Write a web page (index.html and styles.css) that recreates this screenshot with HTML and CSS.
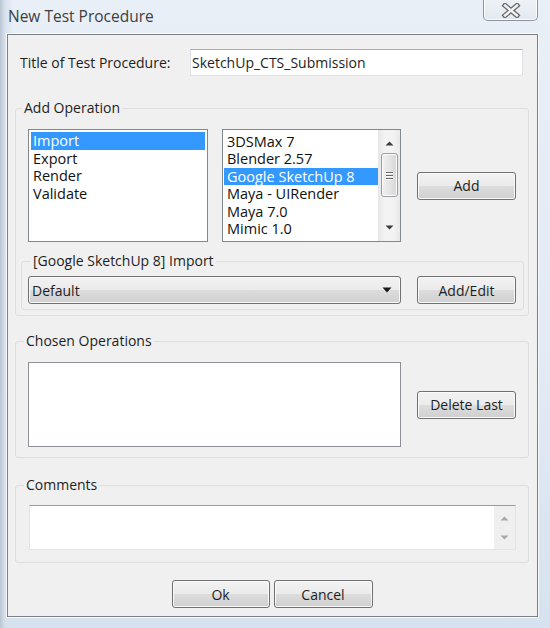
FILE: index.html
```html
<!DOCTYPE html>
<html>
<head>
<meta charset="utf-8">
<title>New Test Procedure</title>
<link rel="stylesheet" href="styles.css">
</head>
<body>
<div class="frame">
  <div class="titlebar">
    <span class="title">New Test Procedure</span>
    <div class="close">
      <svg width="20" height="15" viewBox="0 0 20 15">
        <path d="M4 2.5 L16 12.5 M16 2.5 L4 12.5" stroke="#6a6a6a" stroke-width="5" stroke-linecap="square" fill="none"/>
        <path d="M4 2.5 L16 12.5 M16 2.5 L4 12.5" stroke="#f3f3f3" stroke-width="2.4" stroke-linecap="square" fill="none"/>
      </svg>
    </div>
  </div>
  <div class="client">
    <div class="title-row">
      <span class="label">Title of Test Procedure:</span>
      <div class="textbox">SketchUp_CTS_Submission</div>
    </div>

    <fieldset class="group add-op">
      <legend>Add Operation</legend>
      <div class="op-row">
        <div class="listbox ops">
          <div class="item selected">Import</div>
          <div class="item">Export</div>
          <div class="item">Render</div>
          <div class="item">Validate</div>
        </div>
        <div class="listbox apps">
          <div class="items">
            <div class="item">3DSMax 7</div>
            <div class="item">Blender 2.57</div>
            <div class="item selected">Google SketchUp 8</div>
            <div class="item">Maya - UIRender</div>
            <div class="item">Maya 7.0</div>
            <div class="item">Mimic 1.0</div>
          </div>
          <div class="vscroll">
            <svg class="arrow" width="9" height="5" viewBox="0 0 9 5"><path d="M0.5 4.5 L4.5 0.5 L8.5 4.5 Z" fill="#3c3c3c"/></svg>
            <div class="thumb">
              <span></span><span></span><span></span>
            </div>
            <div class="track-rest"></div>
            <svg class="arrow" width="9" height="5" viewBox="0 0 9 5"><path d="M0.5 0.5 L8.5 0.5 L4.5 4.5 Z" fill="#3c3c3c"/></svg>
          </div>
        </div>
        <button class="btn add">Add</button>
      </div>

      <fieldset class="group sub">
        <legend>[Google SketchUp 8] Import</legend>
        <div class="ctrl-row">
          <div class="combo">
            <span>Default</span>
            <svg width="10" height="6" viewBox="0 0 10 6"><path d="M0.5 0.5 L9.5 0.5 L5 5.5 Z" fill="#1a1a1a"/></svg>
          </div>
          <button class="btn">Add/Edit</button>
        </div>
      </fieldset>
    </fieldset>

    <fieldset class="group chosen">
      <legend>Chosen Operations</legend>
      <div class="ctrl-row centered">
        <div class="chosen-box"></div>
        <button class="btn">Delete Last</button>
      </div>
    </fieldset>

    <fieldset class="group comments">
      <legend>Comments</legend>
      <div class="comments-box">
        <div class="comments-text"></div>
        <div class="comments-scroll">
          <svg width="9" height="5" viewBox="0 0 9 5"><path d="M0.5 4.5 L4.5 0.5 L8.5 4.5 Z" fill="#a8a8a8"/></svg>
          <svg width="9" height="5" viewBox="0 0 9 5"><path d="M0.5 0.5 L8.5 0.5 L4.5 4.5 Z" fill="#a8a8a8"/></svg>
        </div>
      </div>
    </fieldset>

    <div class="actions">
      <button class="btn ok">Ok</button>
      <button class="btn cancel">Cancel</button>
    </div>
  </div>
</div>
</body>
</html>
```

FILE: styles.css
```css
* { box-sizing: border-box; }

html, body {
  margin: 0;
  padding: 0;
}

body {
  width: 550px;
  height: 628px;
  overflow: hidden;
  font-family: "Open Sans", "Noto Sans", "Liberation Sans", sans-serif;
  font-size: 14px;
  color: #1e1e1e;
  background: #e4ecf5;
}

.frame {
  width: 550px;
  height: 628px;
  background:
    linear-gradient(90deg, #b9c5d2 0px, #d7e1ec 5px, rgba(228,236,245,0) 14px),
    linear-gradient(180deg, #e9eff7 0%, #e2eaf4 60%, #d6e2ef 100%);
  padding-right: 2px;
}

.titlebar {
  height: 34px;
  display: flex;
  align-items: flex-start;
  justify-content: space-between;
}

.title {
  margin: 6px 0 0 8px;
  font-size: 15.5px;
  line-height: 20px;
  color: #3f3f3f;
}

.close {
  width: 55px;
  height: 21px;
  margin-right: 10px;
  border: 1px solid #8e949b;
  border-top: none;
  border-radius: 0 0 5px 5px;
  background: linear-gradient(180deg, #eef2f7 0%, #e3e9f0 100%);
  box-shadow: inset 0 -1px 0 #fbfcfe, inset 1px 0 0 #fbfcfe, inset -1px 0 0 #fbfcfe;
  display: flex;
  align-items: center;
  justify-content: center;
}

.client {
  width: 531px;
  height: 583px;
  margin-left: 7px;
  border: 1px solid #7c8085;
  background: #f0f0f0;
  padding: 0 8px 0 7px;
  box-shadow: 0 0 0 1px #f7f9fc;
}

.title-row {
  margin-top: 14px;
  height: 27px;
  display: flex;
  align-items: center;
}

.title-row .label {
  padding-left: 5px;
}

.textbox {
  margin-left: auto;
  margin-right: 6px;
  width: 333px;
  height: 27px;
  background: #fff;
  border: 1px solid #dfe2e7;
  border-top-color: #abadb3;
  padding-left: 1px;
  line-height: 25px;
  font-size: 14px;
}

/* group boxes */
fieldset.group {
  margin: 0;
  min-inline-size: 0;
  border: 1px solid #dedede;
  border-radius: 3px;
}

fieldset.group legend {
  padding: 0 2px;
  line-height: 18px;
  font-size: 14px;
}

.add-op {
  margin-top: 23px !important;
  padding: 12px 4px 5px 5px;
}
.add-op > legend { margin-left: 1px; }

.op-row {
  display: flex;
  align-items: center;
  margin: 0 8px 0 7px;
}

.listbox {
  height: 113px;
  background: #fff;
  border: 1px solid #828790;
  font-size: 14.5px;
}

.listbox .item {
  white-space: nowrap;
  padding-left: 2px;
  color: #111;
}

.listbox .item.selected {
  background: #3399ff;
  color: #fff;
}

.ops {
  width: 180px;
  padding: 2px;
}
.ops .item { line-height: 17.5px; }

.apps {
  width: 179px;
  margin-left: 14px;
  display: flex;
  padding: 0 0 0 1px;
}
.apps .items {
  flex: 1;
  padding-top: 2.5px;
}
.apps .item {
  line-height: 17.5px;
  padding-left: 3px;
}

.vscroll {
  width: 22px;
  height: 111px;
  background: linear-gradient(90deg, #e6e6e6 0%, #f3f3f3 30%, #f3f3f3 70%, #e9e9e9 100%);
  display: flex;
  flex-direction: column;
  align-items: center;
}
.vscroll .arrow {
  flex: none;
  margin: 11px 0 0;
}
.vscroll .arrow:last-child {
  margin: 0 0 11px;
}
.vscroll .thumb {
  flex: none;
  margin-top: 7px;
  width: 17px;
  height: 44px;
  border: 1px solid #9a9ea4;
  border-radius: 3px;
  background: linear-gradient(90deg, #f1f1f1 0%, #e4e4e4 50%, #d6d6d6 100%);
  box-shadow: inset 0 0 0 1px #fbfbfb;
  display: flex;
  flex-direction: column;
  align-items: center;
  justify-content: center;
  gap: 2px;
}
.vscroll .thumb span {
  width: 7px;
  height: 1px;
  background: #6a6a6a;
  box-shadow: 0 1px 0 #fff;
}
.vscroll .track-rest { flex: 1; }

.btn {
  font-family: "Open Sans", "Noto Sans", "Liberation Sans", sans-serif;
  font-size: 14px;
  color: #1e1e1e;
  height: 28px;
  width: 99px;
  padding: 0;
  border: 1px solid #707070;
  border-radius: 3px;
  background: linear-gradient(180deg, #f2f2f2 0%, #ebebeb 50%, #dddddd 51%, #cfcfcf 100%);
  box-shadow: inset 0 0 0 1px #fafafa;
  flex: none;
}

.btn.add {
  margin-left: 16px;
}

.sub {
  margin-top: 10px !important;
  padding: 6px 7px 5px 6px;
}
.sub > legend { margin-left: 3px; }

.ctrl-row {
  display: flex;
  align-items: center;
  gap: 16px;
}

.combo {
  flex: 1;
  height: 28px;
  border: 1px solid #707070;
  border-radius: 3px;
  background: linear-gradient(180deg, #f2f2f2 0%, #ebebeb 50%, #dddddd 51%, #cfcfcf 100%);
  box-shadow: inset 0 0 0 1px #fafafa;
  display: flex;
  align-items: center;
  justify-content: space-between;
  padding: 0 8px 0 3px;
}

.chosen {
  margin-top: 16px !important;
  padding: 12px 12px 10px 12px;
}
.chosen > legend { margin-left: -4px; }

.chosen-box {
  flex: 1;
  height: 85px;
  background: #fff;
  border: 1px solid #8d9096;
}

.comments {
  margin-top: 18px !important;
  padding: 11px 12px 12px 13px;
}
.comments > legend { margin-left: -5px; }

.comments-box {
  height: 45px;
  display: flex;
  border: 1px solid #e3e3e3;
  border-top-color: #9a9a9a;
  background: #fff;
}
.comments-text { flex: 1; }
.comments-scroll {
  width: 21px;
  background: #efefef;
  display: flex;
  flex-direction: column;
  align-items: center;
  justify-content: space-between;
  padding: 10px 0 9px;
}

.actions {
  margin-top: 17px;
  display: flex;
  justify-content: center;
  gap: 4px;
}
.actions .btn.ok { width: 98px; }
```
